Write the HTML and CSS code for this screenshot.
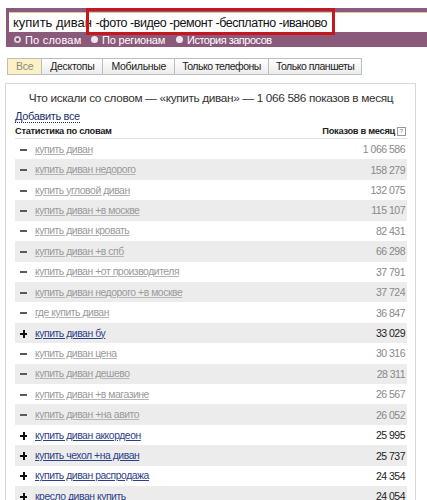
FILE: index.html
```html
<!DOCTYPE html>
<html lang="ru">
<head>
<meta charset="utf-8">
<title>Подбор слов</title>
<link rel="stylesheet" href="styles.css">
</head>
<body>
<div class="topbar">
  <div class="search">купить диван <span class="minus-words">-фото -видео -ремонт -бесплатно -иваново</span></div>
  <div class="radios">
    <span class="radio r1"><i class="dot on"></i>По словам</span>
    <span class="radio r2"><i class="dot"></i>По регионам</span>
    <span class="radio r3"><i class="dot"></i>История запросов</span>
  </div>
  <div class="highlight"></div>
</div>

<div class="tabs">
  <span class="tab active">Все</span>
  <span class="tab">Десктопы</span>
  <span class="tab">Мобильные</span>
  <span class="tab">Только телефоны</span>
  <span class="tab">Только планшеты</span>
</div>

<div class="panel">
  <div class="heading">Что искали со словом — «купить диван» — 1 066 586 показов в месяц</div>
  <div class="addall"><span>Добавить все</span></div>
  <div class="thead">
    <span>Статистика по словам</span>
    <span class="th-right">Показов в месяц<i class="help">?</i></span>
  </div>
  <div class="rows">
    <div class="row minus"><span class="mark"></span><a class="word">купить диван</a><span class="num">1 066 586</span></div>
    <div class="row minus"><span class="mark"></span><a class="word">купить диван недорого</a><span class="num">158 279</span></div>
    <div class="row minus"><span class="mark"></span><a class="word">купить угловой диван</a><span class="num">132 075</span></div>
    <div class="row minus"><span class="mark"></span><a class="word">купить диван +в москве</a><span class="num">115 107</span></div>
    <div class="row minus"><span class="mark"></span><a class="word">купить диван кровать</a><span class="num">82 431</span></div>
    <div class="row minus"><span class="mark"></span><a class="word">купить диван +в спб</a><span class="num">66 298</span></div>
    <div class="row minus"><span class="mark"></span><a class="word">купить диван +от производителя</a><span class="num">37 791</span></div>
    <div class="row minus"><span class="mark"></span><a class="word">купить диван недорого +в москве</a><span class="num">37 724</span></div>
    <div class="row minus"><span class="mark"></span><a class="word">где купить диван</a><span class="num">36 847</span></div>
    <div class="row plus"><span class="mark"></span><a class="word">купить диван бу</a><span class="num">33 029</span></div>
    <div class="row minus"><span class="mark"></span><a class="word">купить диван цена</a><span class="num">30 316</span></div>
    <div class="row minus"><span class="mark"></span><a class="word">купить диван дешево</a><span class="num">28 311</span></div>
    <div class="row minus"><span class="mark"></span><a class="word">купить диван +в магазине</a><span class="num">26 567</span></div>
    <div class="row minus"><span class="mark"></span><a class="word">купить диван +на авито</a><span class="num">26 052</span></div>
    <div class="row plus"><span class="mark"></span><a class="word">купить диван аккордеон</a><span class="num">25 995</span></div>
    <div class="row plus"><span class="mark"></span><a class="word">купить чехол +на диван</a><span class="num">25 737</span></div>
    <div class="row plus"><span class="mark"></span><a class="word">купить диван распродажа</a><span class="num">24 354</span></div>
    <div class="row plus"><span class="mark"></span><a class="word">кресло диван купить</a><span class="num">24 054</span></div>
  </div>
</div>
</body>
</html>
```
FILE: styles.css
```css
html, body {
  margin: 0;
  padding: 0;
  background: #fff;
}
body {
  font-family: "Liberation Sans", Arial, sans-serif;
  color: #333;
  overflow: hidden;
}

.topbar {
  position: relative;
  margin: 8px 0 0 6px;
  height: 39px;
  padding-top: 4px;
  box-sizing: border-box;
  background: #8b5a7b;
}
.search {
  margin-left: 3px;
  height: 20px;
  box-sizing: border-box;
  border-top: 1px solid #d9c7a4;
  background: #fff;
  padding-left: 4px;
  font-size: 13px;
  line-height: 19px;
  color: #111;
  white-space: nowrap;
}
.minus-words {
  font-size: 12.5px;
  letter-spacing: -0.45px;
}
.radios {
  display: flex;
  align-items: center;
  height: 15px;
  padding-left: 8px;
}
.radio {
  display: flex;
  align-items: center;
  gap: 4px;
  font-size: 11px;
  letter-spacing: -0.2px;
  color: #fff;
  white-space: nowrap;
}
.r1 { width: 77px; letter-spacing: 0.2px; }
.r2 { width: 85px; }
.r3 { letter-spacing: -0.5px; }
.dot {
  width: 7px;
  height: 7px;
  border-radius: 50%;
  background: #efe6ec;
  box-sizing: border-box;
}
.dot.on {
  background: #5e4656;
  border: 2px solid #d8d2d6;
}
.highlight {
  position: absolute;
  left: 80px;
  top: 0;
  width: 249px;
  height: 27px;
  border: 3px solid #c8161f;
  box-sizing: border-box;
}

.tabs {
  display: flex;
  margin: 11px 0 0 7px;
}
.tab {
  height: 17px;
  box-sizing: border-box;
  border: 1px solid #bdbdbd;
  border-left: none;
  background: linear-gradient(#ffffff, #ececec);
  font-size: 10.5px;
  letter-spacing: -0.3px;
  line-height: 15px;
  padding: 0 8px;
  color: #222;
}
.tab:first-child {
  border-left: 1px solid #bdbdbd;
}
.tab:nth-child(4),
.tab:nth-child(5) {
  letter-spacing: -0.5px;
  padding: 0 7px;
}
.tab.active {
  background: #fcf0c5;
  color: #8a8a80;
}

.panel {
  margin: 8px 0 0 5px;
  width: 411px;
  box-sizing: border-box;
  border: 1px solid #d8d8d8;
  border-bottom: none;
  padding: 0 8px 0 9px;
}
.heading {
  text-align: center;
  font-size: 11.8px;
  letter-spacing: -0.35px;
  color: #333;
  padding-top: 7px;
  height: 22px;
  box-sizing: border-box;
  line-height: 15px;
  white-space: nowrap;
}
.addall {
  font-size: 11px;
  letter-spacing: -0.35px;
  height: 18px;
  line-height: 16px;
  padding-top: 2px;
  box-sizing: border-box;
}
.addall span {
  color: #23306a;
  border-bottom: 1px dotted #23306a;
}
.thead {
  display: flex;
  justify-content: space-between;
  align-items: center;
  height: 14px;
  font-size: 9.3px;
  letter-spacing: -0.3px;
  font-weight: bold;
  color: #222;
  border-bottom: 1px solid #e0e0e0;
}
.th-right {
  display: flex;
  align-items: center;
}
.help {
  font-style: normal;
  font-weight: normal;
  width: 7px;
  height: 7px;
  border: 1px solid #999;
  font-size: 6px;
  line-height: 7px;
  text-align: center;
  color: #777;
  margin-left: 2px;
  margin-right: 1px;
  letter-spacing: 0;
}

.row {
  display: flex;
  align-items: center;
  height: 20.43px;
  font-size: 10.4px;
  letter-spacing: -0.45px;
}
.row:nth-child(even) {
  background: #ececec;
}
.mark {
  position: relative;
  width: 7px;
  height: 7px;
  margin-left: 5px;
  margin-right: 8px;
}
.mark::before,
.mark::after {
  content: "";
  position: absolute;
  left: 0;
  top: 3px;
  width: 7px;
  height: 2px;
}
.minus .mark::before { background: #5a5a5a; }
.plus .mark::before,
.plus .mark::after { background: #111; }
.plus .mark::after {
  left: 2.5px;
  top: 0;
  width: 2px;
  height: 8px;
}
.word {
  text-decoration: underline;
  flex: 1;
}
.num {
  font-size: 10.5px;
  letter-spacing: -0.5px;
  padding-right: 2px;
}
.minus .word { color: #9a9a9a; text-decoration-color: #b5b5b5; }
.minus .num { color: #888; }
.plus .word { color: #2e3f87; }
.plus .num { color: #222; }
```
